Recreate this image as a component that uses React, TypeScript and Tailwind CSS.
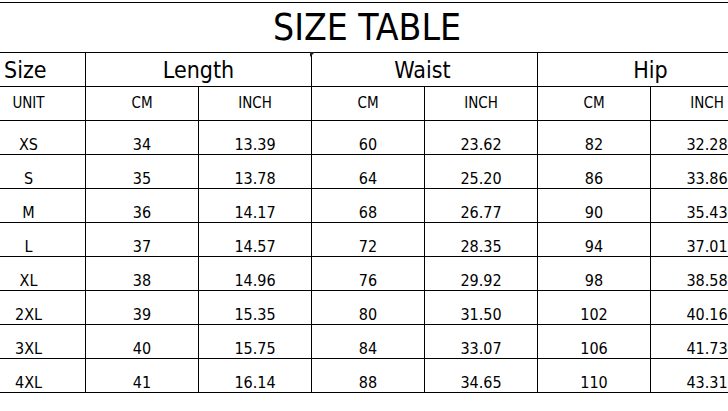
import React from "react";

const rows = [
  ["XS", "34", "13.39", "60", "23.62", "82", "32.28"],
  ["S", "35", "13.78", "64", "25.20", "86", "33.86"],
  ["M", "36", "14.17", "68", "26.77", "90", "35.43"],
  ["L", "37", "14.57", "72", "28.35", "94", "37.01"],
  ["XL", "38", "14.96", "76", "29.92", "98", "38.58"],
  ["2XL", "39", "15.35", "80", "31.50", "102", "40.16"],
  ["3XL", "40", "15.75", "84", "33.07", "106", "41.73"],
  ["4XL", "41", "16.14", "88", "34.65", "110", "43.31"],
];

const font = { fontFamily: '"DejaVu Sans Condensed", "DejaVu Sans", sans-serif' };

export default function App() {
  return (
    <div className="w-[728px] h-[411px] overflow-hidden bg-white text-black relative" style={font}>
      <div className="pt-[2px] w-[763px]">
        <div className="h-[51px] w-[728px] border-t border-b border-black flex items-center justify-center pl-[6px] text-[37px] leading-none">
          SIZE TABLE
        </div>
        <div className="grid grid-cols-[86px_226px_226px_226px] h-[34px] border-b border-black text-[23px] leading-none">
          <div className="border-r border-black flex items-center pl-[4px] pt-[2px]">Size</div>
          <div className="border-r border-black flex items-center justify-center pt-[2px]">Length</div>
          <div className="border-r border-black flex items-center justify-center pt-[2px] pr-[4px]">Waist</div>
          <div className="border-r border-black flex items-center justify-center pt-[2px]">Hip</div>
        </div>
        <div className="grid grid-cols-[86px_repeat(6,113px)] h-[34px] border-b border-black text-[15px] leading-none">
          <div className="border-r border-black flex items-center justify-center pr-[28px]">UNIT</div>
          {["CM", "INCH", "CM", "INCH", "CM", "INCH"].map((t, i) => (
            <div key={i} className="border-r border-black flex items-center justify-center">
              {t}
            </div>
          ))}
        </div>
        {rows.map((r, ri) => (
          <div key={ri} className="grid grid-cols-[86px_repeat(6,113px)] h-[34px] border-b border-black text-[16px] leading-none">
            <div className="border-r border-black flex items-end justify-center pb-[1px] pr-[28px]">{r[0]}</div>
            {r.slice(1).map((t, i) => (
              <div key={i} className="border-r border-black flex items-end justify-center pb-[1px]">
                {t}
              </div>
            ))}
          </div>
        ))}
      </div>
      <svg className="absolute left-[310px] top-[52px]" width="5" height="5" viewBox="0 0 5 5">
        <polygon points="0,0 5,0 0,5" fill="#222" />
      </svg>
    </div>
  );
}
